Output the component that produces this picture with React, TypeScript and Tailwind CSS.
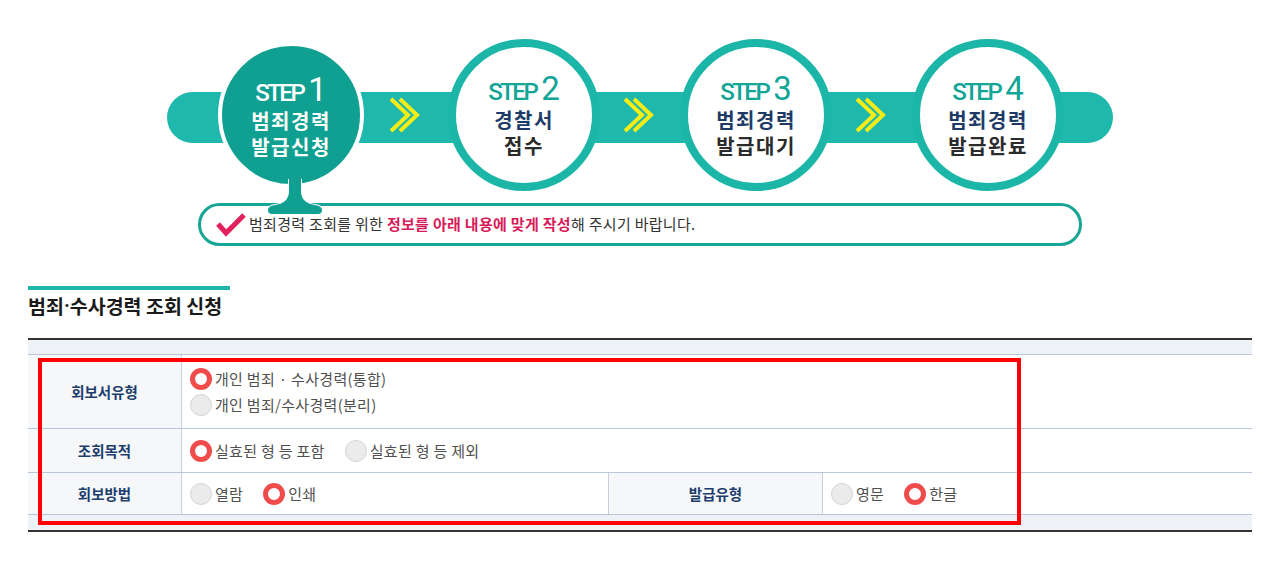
import React from 'react';

const Chevrons = () => (
  <svg width="34" height="36" viewBox="0 0 34 36">
    <polyline points="2,2 19,18 2,34" fill="none" stroke="#f6ec16" strokeWidth="4" />
    <polyline points="11,2 28,18 11,34" fill="none" stroke="#f6ec16" strokeWidth="4" />
  </svg>
);

const Step = ({ num, line1, line2 }: { num: string; line1: string; line2: string }) => (
  <div className="w-[152px] h-[152px] shrink-0 rounded-full border-[8px] border-[#1cb6a9] bg-white flex flex-col items-center justify-center pt-[2px]">
    <div className="flex items-baseline h-[30px]">
      <span className="font-['Roboto',sans-serif] text-[24px] font-medium tracking-[-2.5px] text-[#10a596] leading-none">STEP</span>
      <span className="font-['Roboto',sans-serif] text-[33px] font-normal text-[#10a596] leading-none ml-[5px]">{num}</span>
    </div>
    <div className="mt-[5px] text-[20px] font-bold leading-[26px] tracking-[1.5px] text-[#1d3b66]">{line1}</div>
    <div className="text-[20px] font-bold leading-[26px] tracking-[1.5px] text-[#2b2b2b]">{line2}</div>
  </div>
);

const Radio = ({ checked, label }: { checked?: boolean; label: string }) => (
  <label className="flex items-center gap-[3px]">
    {checked ? (
      <span className="w-[22px] h-[22px] rounded-full border-[5px] border-[#f04c4c] bg-white" />
    ) : (
      <span className="w-[22px] h-[22px] rounded-full border border-[#d4d4d4] bg-[#ebebeb]" />
    )}
    <span className="text-[15px] leading-[22px] tracking-[0.3px] text-[#505050]">{label}</span>
  </label>
);

const Label = ({ children, width }: { children: React.ReactNode; width: string }) => (
  <div className={`${width} shrink-0 h-full flex items-center justify-center bg-[#f6f7f9] border-r border-[#c8d0de] text-[14.5px] font-bold text-[#1d3e6d]`}>
    {children}
  </div>
);

export default function App() {
  return (
    <div className="w-[1280px] h-[579px] bg-white overflow-hidden font-['Noto_Sans_CJK_KR',sans-serif]">
      {/* steps banner */}
      <div className="pt-[37px] pl-[167px]">
        <div className="relative w-[946px] h-[155px]">
          <div className="absolute left-0 right-0 top-[55px] h-[51px] rounded-full bg-[#1eb8ac]" />
          <div className="relative flex items-center h-full pl-[51px]">
            <div className="w-[146px] h-[146px] shrink-0 rounded-full border-4 border-white bg-[#0fa091] flex flex-col items-center justify-center pt-[4px]">
              <div className="flex items-baseline h-[30px]">
                <span className="font-['Roboto',sans-serif] text-[24px] font-medium tracking-[-2.5px] text-white leading-none">STEP</span>
                <span className="font-['Roboto',sans-serif] text-[33px] font-normal text-white leading-none ml-[5px]">1</span>
              </div>
              <div className="mt-[5px] text-[20px] font-bold leading-[26px] tracking-[1.5px] text-white">범죄경력</div>
              <div className="text-[20px] font-bold leading-[26px] tracking-[1.5px] text-white">발급신청</div>
            </div>
            <div className="w-[84px] flex justify-center"><Chevrons /></div>
            <Step num="2" line1="경찰서" line2="접수" />
            <div className="w-[80px] flex justify-center"><Chevrons /></div>
            <Step num="3" line1="범죄경력" line2="발급대기" />
            <div className="w-[80px] flex justify-center"><Chevrons /></div>
            <Step num="4" line1="범죄경력" line2="발급완료" />
          </div>
        </div>
        <div className="relative ml-[31px] mt-[11px] w-[884px] h-[43px] rounded-full border-[3px] border-[#17a596] bg-white flex items-center pl-[14px]">
          <svg className="absolute left-[63px] top-[-27px]" width="62" height="38" viewBox="0 0 62 38">
            <path
              d="M25 0 L37 0 L37 12 Q37 24 51 26 Q58 27 58 31 Q58 35 54 35 L8 35 Q4 35 4 31 Q4 27 11 26 Q25 24 25 12 Z"
              fill="#0fa091"
              stroke="white"
              strokeWidth="2"
              paintOrder="stroke"
            />
          </svg>
          <svg width="32" height="26" viewBox="0 0 32 26" className="mr-[2px]">
            <path d="M3 12 L11 21 L29 3" fill="none" stroke="#e0215c" strokeWidth="5" />
          </svg>
          <span className="text-[15px] tracking-[0.3px] text-[#333]">
            범죄경력 조회를 위한 <span className="font-bold text-[#d81b5a]">정보를 아래 내용에 맞게 작성</span>해 주시기 바랍니다.
          </span>
        </div>
      </div>

      {/* section title */}
      <div className="pl-[28px] mt-[40px]">
        <div className="w-[202px] h-[4px] bg-[#1eb5aa]" />
        <h2 className="mt-[4px] h-[24px] flex items-center text-[19.5px] font-bold text-[#1a1a1a]">
          범죄<span className="font-['Roboto',sans-serif]">·</span>수사경력 조회 신청
        </h2>
      </div>

      {/* form table */}
      <div className="relative ml-[28px] mt-[20px] w-[1224px] border-t-2 border-b-2 border-[#333]">
        <div className="h-[15px] bg-[#eef1f6] border-b border-[#b9c5dc]" />
        <div className="h-[74px] flex border-b border-[#b9c5dc]">
          <Label width="w-[154px]">회보서유형</Label>
          <div className="flex flex-col justify-center gap-[4px] pl-[8px]">
            <Radio checked label="개인 범죄 · 수사경력(통합)" />
            <Radio label="개인 범죄/수사경력(분리)" />
          </div>
        </div>
        <div className="h-[44px] flex border-b border-[#b9c5dc]">
          <Label width="w-[154px]">조회목적</Label>
          <div className="flex items-center gap-[20px] pl-[8px]">
            <Radio checked label="실효된 형 등 포함" />
            <Radio label="실효된 형 등 제외" />
          </div>
        </div>
        <div className="h-[42px] flex border-b border-[#b9c5dc]">
          <Label width="w-[154px]">회보방법</Label>
          <div className="w-[427px] h-full flex items-center gap-[20px] pl-[8px] border-r border-[#c8d0de]">
            <Radio label="열람" />
            <Radio checked label="인쇄" />
          </div>
          <Label width="w-[214px]">발급유형</Label>
          <div className="flex items-center gap-[20px] pl-[8px]">
            <Radio label="영문" />
            <Radio checked label="한글" />
          </div>
        </div>
        <div className="h-[15px] bg-[#eef1f6]" />
        <div className="absolute left-[10px] top-[18px] w-[983px] h-[167px] border-4 border-[#ff0000] pointer-events-none" />
      </div>
    </div>
  );
}
